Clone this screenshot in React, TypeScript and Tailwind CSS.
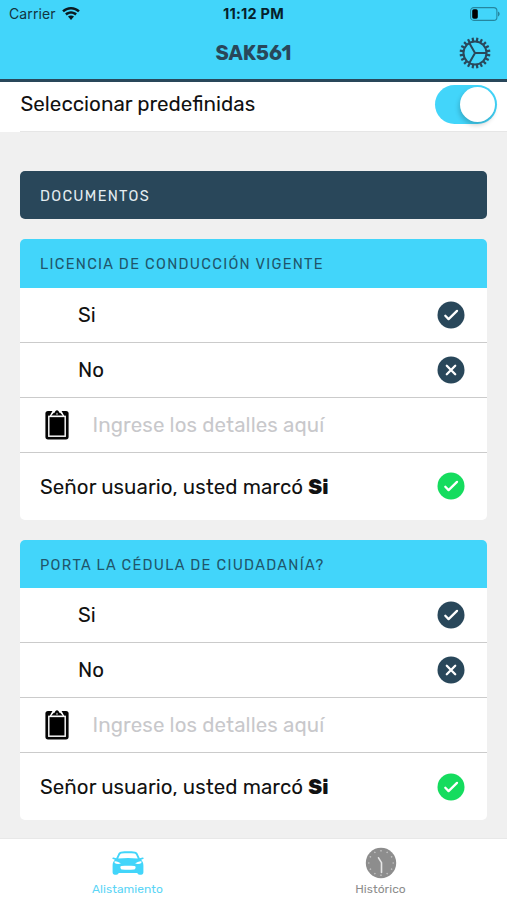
import React from "react";

const TEETH = Array.from({ length: 20 }, (_, i) => i * 18 + 9);
const TICKS = Array.from({ length: 12 }, (_, i) => i * 30);

function WifiIcon() {
  return (
    <svg width="18" height="14" viewBox="0 0 18 14" fill="#0b1a20">
      <path d="M9 0C5.600 0 2.500 1.300 0.200 3.500L1.900 5.300C3.700 3.600 6.200 2.500 9 2.500s5.300 1.100 7.100 2.800l1.700-1.800C15.500 1.300 12.400 0 9 0Z" />
      <path d="M9 4.300C6.700 4.300 4.700 5.200 3.100 6.600l1.700 1.800C5.900 7.400 7.400 6.700 9 6.700s3.100.7 4.200 1.700l1.700-1.800C13.300 5.200 11.300 4.300 9 4.300Z" />
      <path d="M9 8.500c-1.200 0-2.200.4-3 1.100l3 3.500 3-3.500c-.8-.7-1.800-1.100-3-1.100Z" />
    </svg>
  );
}

function BatteryIcon() {
  return (
    <svg width="30" height="14" viewBox="0 0 30 14">
      <rect x="0.600" y="0.600" width="26.300" height="12.800" rx="3.200" fill="none" stroke="#25869f" strokeWidth="1.100" />
      <rect x="2.200" y="2.300" width="5.600" height="9.400" rx="1.600" fill="#000" />
      <path d="M28 4.600c2.200 1 2.200 3.800 0 4.800Z" fill="#25869f" />
    </svg>
  );
}

function GearIcon() {
  return (
    <svg width="32" height="32" viewBox="-16 -16 32 32" stroke="#29475a" fill="none">
      <circle r="11.500" strokeWidth="2" />
      {TEETH.map((a) => (
        <path key={a} d="M12 0H15.400" strokeWidth="2.200" transform={`rotate(${a})`} />
      ))}
      <path d="M0 0H11.300M0 0L-5.700 -9.900M0 0L-5.700 9.900" strokeWidth="2" />
    </svg>
  );
}

function MarkIcon({ kind, color }: { kind: "check" | "cross"; color: string }) {
  return (
    <svg width="28" height="28" viewBox="-14 -14 28 28" className="block shrink-0">
      <circle r="13.500" fill={color} />
      {kind === "check" ? (
        <path d="M-5.700 .8L-2.400 4.100L6 -4.100" fill="none" stroke="#fff" strokeWidth="2.300" strokeLinecap="round" strokeLinejoin="round" />
      ) : (
        <path d="M-4.200 -4.200L4.200 4.200M4.200 -4.200L-4.200 4.200" stroke="#fff" strokeWidth="2.300" strokeLinecap="round" />
      )}
    </svg>
  );
}

function ClipboardIcon() {
  return (
    <svg width="24" height="30" viewBox="0 0 24 30">
      <rect x="0.400" y="0.900" width="23.200" height="28.500" rx="2.600" fill="#050505" />
      <rect x="3.800" y="6.400" width="16.400" height="19.800" fill="#000" stroke="#f4f4f4" strokeWidth="1.500" />
      <path d="M4.400 6.600L8 0h8L19.600 6.600Z" fill="#fff" />
      <path d="M6.300 5.400L8.800 2.700H9.700C10 1.100 10.900.2 12 .2s2 .9 2.300 2.500h.9L17.700 5.400Z" fill="#050505" />
      <path d="M10.900 4.400L12 2.600L13.100 4.400Z" fill="#ccc" />
    </svg>
  );
}

function CarIcon() {
  return (
    <svg width="32" height="24" viewBox="0 0 32 24">
      <path
        d="M4.200 7.200L6.200 2.900C6.800 1.600 7.600 1 8.900.8 13.500.2 18.500.2 23.100.8c1.300.2 2.100.8 2.700 2.100L27.800 7.200l2.800-.8c1.100-.1 1.500 1.100.5 1.500l-2 .9c1.500 1.500 2.300 3.200 2.300 5.600v6.900c0 1.600-.9 2.400-2.200 2.400h-1.500c-1.300 0-2.100-.7-2.300-1.700H6.600c-.2 1-1 1.700-2.300 1.700H2.800c-1.300 0-2.200-.8-2.200-2.400v-6.900c0-2.400.8-4.100 2.300-5.600l-2-.9C-.1 7.500.3 6.300 1.400 6.400Z"
        fill="#42d5fa"
      />
      <path d="M6.200 7.500L7.800 3.900c.4-.8.9-1.200 1.700-1.300 4.300-.5 8.700-.5 13 0 .8.1 1.300.5 1.700 1.300l1.600 3.600C19.500 6.700 12.500 6.700 6.200 7.500Z" fill="#fff" />
      <path d="M2.600 10.200c2.400-.1 4.700.8 6.300 2.400-2.300.8-4.800.5-6.300-.6ZM29.400 10.200c-2.400-.1-4.700.8-6.300 2.400 2.300.8 4.800.5 6.300-.6Z" fill="#fff" />
      <path d="M9.500 15.100c4.300-.4 8.700-.4 13 0 .9.100 1.200.6 1.100 1.300l-.2.900c-.2.800-.7 1.200-1.500 1.300-3.900.3-7.900.3-11.800 0-.8-.1-1.300-.5-1.500-1.300l-.2-.9c-.1-.7.200-1.200 1.100-1.300Z" fill="#fff" />
    </svg>
  );
}

function ClockIcon() {
  return (
    <svg width="32" height="32" viewBox="-16 -16 32 32">
      <circle r="15.200" fill="#8d8d8d" />
      {TICKS.map((a) => (
        <path key={a} d="M0 -13V-11.500" stroke="#ccc" strokeWidth="1.200" transform={`rotate(${a})`} />
      ))}
      <path d="M.5 9.400V-.300L-2.500 -5.200" fill="none" stroke="#e6e6e6" strokeWidth="1.600" strokeLinecap="round" />
    </svg>
  );
}

function OptionRow({ label, kind }: { label: string; kind: "check" | "cross" }) {
  return (
    <div className="flex h-[55px] items-center justify-between border-b border-[#cbcbcb] pr-[22px] pl-[58px]">
      <span className="pt-[0.6px] text-[20.5px]">{label}</span>
      <MarkIcon kind={kind} color="#29475a" />
    </div>
  );
}

function Question({ title }: { title: string }) {
  return (
    <section className="mt-5 h-[280.6px] overflow-hidden rounded-[5px] bg-white">
      <h2 className="flex h-[48.7px] items-center bg-[#42d5fa] pt-[3px] pl-5 text-[14.5px] tracking-[1.3px] text-[#20566b]">{title}</h2>
      <OptionRow label="Si" kind="check" />
      <OptionRow label="No" kind="cross" />
      <div className="flex h-[55px] items-center border-b border-[#cbcbcb] pl-[24.5px]">
        <ClipboardIcon />
        <span className="ml-[24px] pt-[0.6px] text-[20.5px] tracking-[0.1px] text-[#c8c8cb]">Ingrese los detalles aquí</span>
      </div>
      <div className="flex h-[67.5px] items-center justify-between pr-[22px] pl-5">
        <span className="pt-[1.2px] text-[20.5px] tracking-[0.07px]">
          Señor usuario, usted marcó <b className="font-extrabold">Si</b>
        </span>
        <MarkIcon kind="check" color="#15dc5e" />
      </div>
    </section>
  );
}

export default function App() {
  return (
    <div className="flex h-[900px] w-[507px] flex-col overflow-hidden bg-[#f0f0f0] font-['Rubik','Roboto',sans-serif] whitespace-nowrap text-[#111]">
      <header className="h-[82px] shrink-0 border-b-[3px] border-[#29475a] bg-[#42d5fa]">
        <div className="grid h-[27px] grid-cols-[1fr_auto_1fr] items-center px-[7px] font-['Inter',sans-serif]">
          <div className="flex items-center gap-[6px] pl-[2px] text-[14px] tracking-[0.1px] text-[#123440]">
            <span>Carrier</span>
            <WifiIcon />
          </div>
          <div className="text-center text-[14.5px] font-bold tracking-[0.25px] text-[#06212a]">11:12 PM</div>
          <div className="flex justify-end">
            <BatteryIcon />
          </div>
        </div>
        <div className="grid h-[52px] grid-cols-[1fr_auto_1fr] items-center px-4">
          <span />
          <h1 className="text-center text-[20px] font-bold text-[#29475a]">SAK561</h1>
          <div className="flex justify-end">
            <GearIcon />
          </div>
        </div>
      </header>
      <div className="h-[50px] shrink-0 bg-white pl-5">
        <div className="flex h-[50px] items-center justify-between border-b border-[#e6e6e6] pr-[10px] pb-[4px]">
          <span className="pl-[0.5px] text-[20.6px]">Seleccionar predefinidas</span>
          <div className="flex h-[39px] w-[62px] items-center justify-end rounded-full bg-[#42d5fa] pr-[2px]">
            <span className="size-[35px] rounded-full bg-white shadow-[-1px_3px_5px_rgba(0,0,0,0.2)]" />
          </div>
        </div>
      </div>
      <main className="flex-1 overflow-hidden px-5 pt-[39px]">
        <div className="flex h-[48px] items-center rounded-[5px] bg-[#29475a] pt-[3px] pl-5 text-[14.5px] tracking-[1.3px] text-[#e4edf1]">DOCUMENTOS</div>
        <Question title="LICENCIA DE CONDUCCIÓN VIGENTE" />
        <Question title="PORTA LA CÉDULA DE CIUDADANÍA?" />
      </main>
      <nav className="grid h-[62px] shrink-0 grid-cols-2 border-t border-[#e8e8e8] bg-white pl-px">
        <div className="flex flex-col items-center pt-2 text-[12px] text-[#5bd5f6]">
          <div className="flex h-8 items-center">
            <CarIcon />
          </div>
          <span className="mt-px tracking-[0.05px]">Alistamiento</span>
        </div>
        <div className="flex flex-col items-center pt-2 text-[12px] text-[#8d8d8d]">
          <ClockIcon />
          <span className="mt-px tracking-[0.05px]">Histórico</span>
        </div>
      </nav>
    </div>
  );
}
